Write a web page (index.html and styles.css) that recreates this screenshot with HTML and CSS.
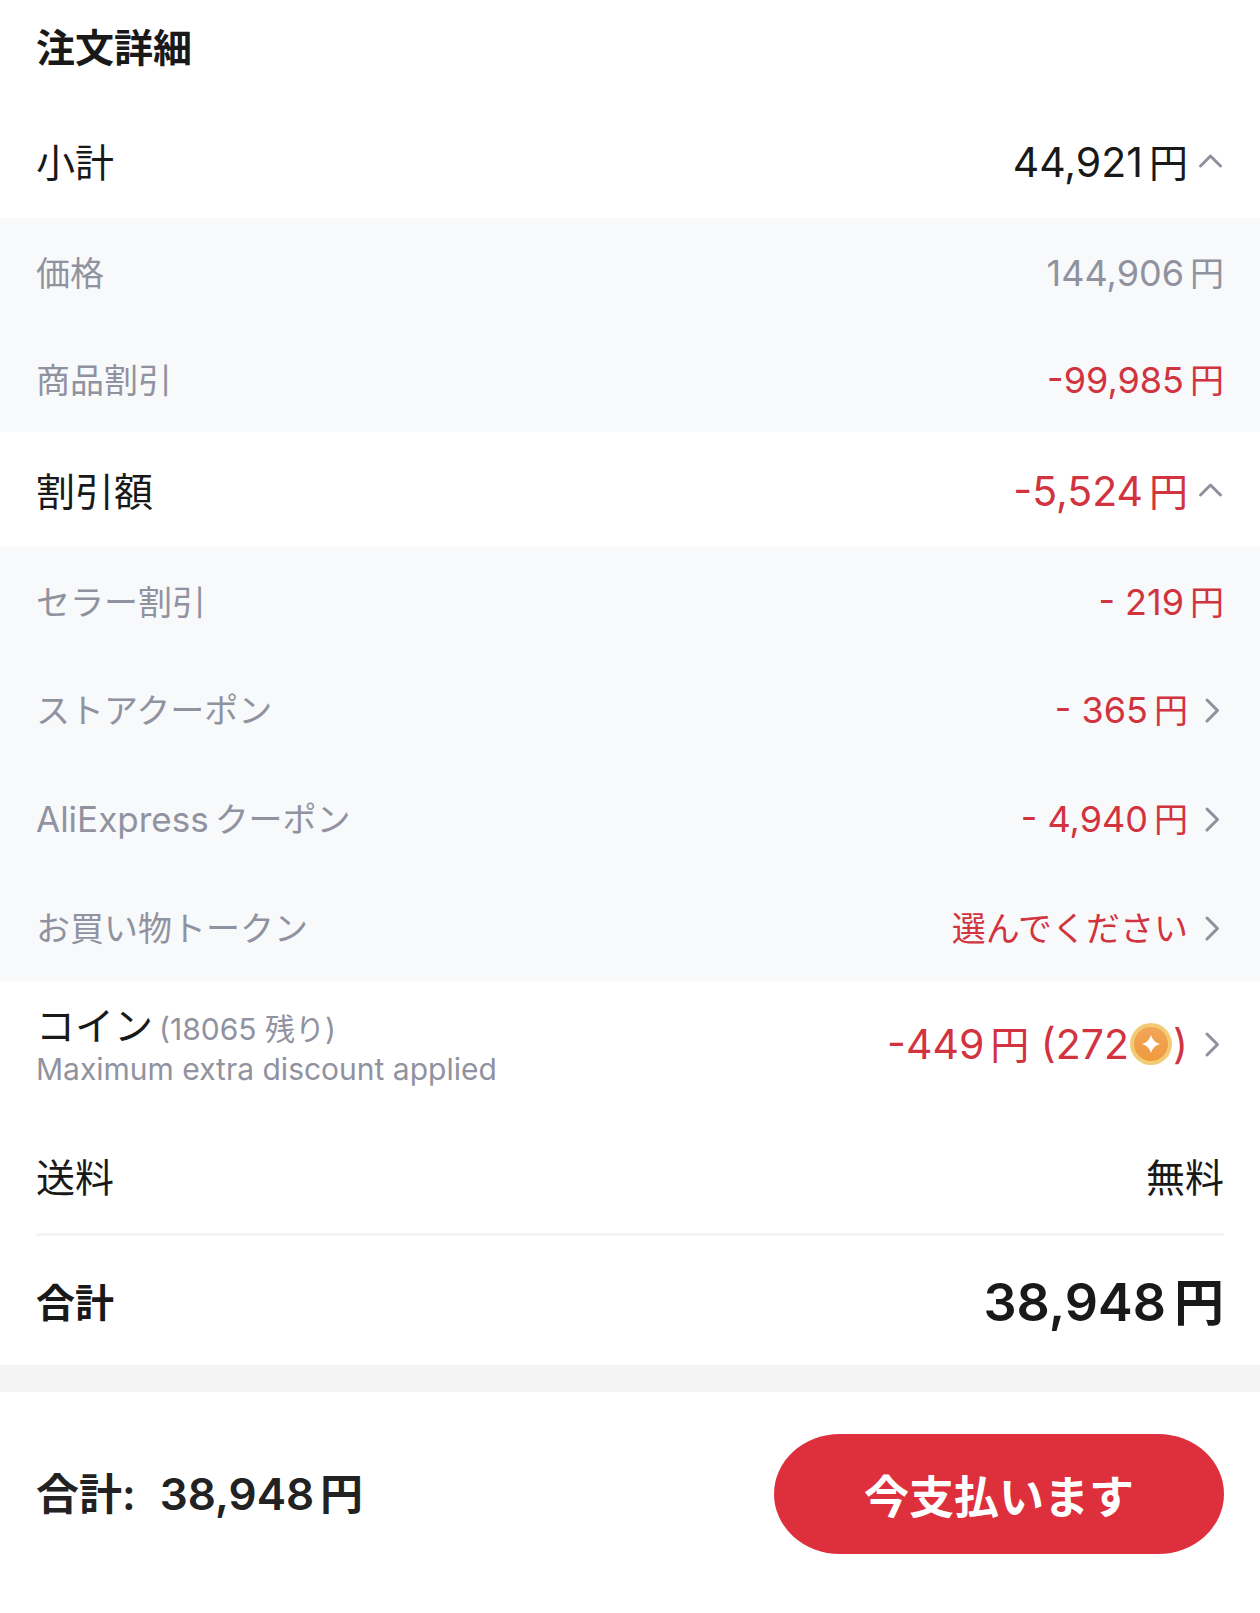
FILE: index.html
```html
<!DOCTYPE html>
<html lang="ja">

<head>
    <meta charset="UTF-8">
    <meta name="viewport" content="width=device-width, initial-scale=1.0">
    <title>注文詳細</title>
    <link rel="stylesheet" href="styles.css">
</head>

<body>
    <main class="order">
        <h1>注文詳細</h1>

        <button type="button" class="row main-row" aria-expanded="true">
            <span>小計</span>
            <span class="value">44,921<span class="yen">円</span></span>
            <svg class="arrow" viewBox="0 0 36 36"><path d="M12.500 21 L22.500 11 L32.500 21" /></svg>
        </button>
        <div class="details">
            <div class="row">
                <span>価格</span>
                <span class="value">144,906<span class="yen">円</span></span>
            </div>
            <div class="row">
                <span>商品割引</span>
                <span class="value red">-99,985<span class="yen">円</span></span>
            </div>
        </div>

        <button type="button" class="row main-row" aria-expanded="true">
            <span>割引額</span>
            <span class="value red">-5,524<span class="yen">円</span></span>
            <svg class="arrow" viewBox="0 0 36 36"><path d="M12.500 21 L22.500 11 L32.500 21" /></svg>
        </button>
        <div class="details">
            <div class="row">
                <span>セラー割引</span>
                <span class="value red">- 219<span class="yen">円</span></span>
            </div>
            <a href="#" class="row">
                <span>ストアクーポン</span>
                <span class="value red">- 365<span class="yen">円</span></span>
                <svg class="arrow" viewBox="0 0 36 36"><path d="M19 7 L29.500 17.500 L19 28" /></svg>
            </a>
            <a href="#" class="row">
                <span><span class="latin">AliExpress</span>クーポン</span>
                <span class="value red">- 4,940<span class="yen">円</span></span>
                <svg class="arrow" viewBox="0 0 36 36"><path d="M19 7 L29.500 17.500 L19 28" /></svg>
            </a>
            <a href="#" class="row">
                <span>お買い物トークン</span>
                <span class="value text-value red">選んでください</span>
                <svg class="arrow" viewBox="0 0 36 36"><path d="M19 7 L29.500 17.500 L19 28" /></svg>
            </a>
        </div>

        <a href="#" class="row main-row coin-row">
            <span class="coin-label">
                <span>コイン<small class="coin-left">(18065 残り)</small></span>
                <small>Maximum extra discount applied</small>
            </span>
            <span class="value red">-449<span class="yen">円</span> (272<svg class="coin" viewBox="0 0 42 42">
                    <defs>
                        <linearGradient id="coin-fill" x1="0" y1="0" x2="0" y2="1">
                            <stop offset="0" stop-color="#f2a65a" />
                            <stop offset="1" stop-color="#ef9a3d" />
                        </linearGradient>
                    </defs>
                    <circle cx="21" cy="21" r="21" fill="#f3cb74" />
                    <circle cx="21" cy="21" r="17" fill="url(#coin-fill)" />
                    <path d="M21 12 Q23 19 30 21 Q23 23 21 30 Q19 23 12 21 Q19 19 21 12 Z" fill="#fff" />
                </svg>)</span>
            <svg class="arrow" viewBox="0 0 36 36"><path d="M19 7 L29.500 17.500 L19 28" /></svg>
        </a>

        <div class="row main-row">
            <span>送料</span>
            <span class="value text-value">無料</span>
        </div>
        <hr>
        <div class="row total-row">
            <span>合計</span>
            <span class="value">38,948<span class="yen">円</span></span>
        </div>
    </main>

    <footer class="pay-bar">
        <p><span>合計:</span><span class="pay-total">38,948<span class="yen">円</span></span></p>
        <button type="button" class="pay-btn">今支払います</button>
    </footer>
</body>

</html>
```

FILE: styles.css
```css
/* Global Styles */
* {
    box-sizing: border-box;
}

body {
    font-family: "Inter", "Noto Sans CJK JP", sans-serif;
    background-color: #fff;
    color: #191919;
    margin: 0;
}

h1 {
    font-size: 39px;
    font-weight: 700;
    line-height: 56px;
    margin: 0;
    padding: 20px 36px 27px;
}

/* Rows */
.row {
    display: flex;
    align-items: center;
    width: 100%;
    min-height: 107px;
    padding: 4px 36px 0;
    border: none;
    background: none;
    color: #9192a0;
    font-family: inherit;
    font-size: 34px;
    line-height: 48px;
    text-align: left;
    text-decoration: none;
}

.value {
    margin-left: auto;
    font-size: 36px;
    white-space: nowrap;
}

.yen {
    margin-left: 6px;
    font-size: 34px;
}

.text-value {
    font-size: 34px;
}

.red {
    color: #d1333f;
}

.arrow {
    flex: none;
    width: 36px;
    height: 36px;
    fill: none;
    stroke: #8f909e;
    stroke-width: 3;
    stroke-linecap: round;
    stroke-linejoin: round;
}

.details {
    background-color: #f8f9fb;
}

.details a {
    min-height: 109px;
}

.latin {
    margin-right: 6px;
    font-size: 35px;
}

.main-row {
    min-height: 115px;
    color: #191919;
    font-size: 39px;
}

.main-row .value {
    font-size: 41px;
}

.main-row .yen,
.main-row .text-value {
    font-size: 39px;
}

.main-row .red {
    color: #d1333f;
}

/* Coins */
.coin-row {
    min-height: 127px;
    margin-bottom: 10px;
    padding-top: 0;
}

.coin-label {
    display: flex;
    flex-direction: column;
}

.coin-label small {
    color: #9192a0;
    font-size: 30px;
    line-height: 38px;
}

.coin-label .coin-left {
    margin-left: 6px;
}

.coin {
    width: 42px;
    height: 42px;
    margin: 0 1px;
    vertical-align: -6px;
}

/* Total */
hr {
    height: 3px;
    margin: 0 36px;
    border: none;
    background-color: #f4f4f4;
}

.total-row {
    min-height: 129px;
    color: #191919;
    font-size: 39px;
    font-weight: 600;
}

.total-row .value {
    font-size: 52px;
}

.total-row .yen {
    margin-left: 8px;
    font-size: 50px;
}

/* Pay bar */
.pay-bar {
    display: flex;
    align-items: center;
    justify-content: space-between;
    padding: 42px 36px 59px;
    border-top: 27px solid #f4f4f4;
    color: #222;
}

.pay-bar p {
    margin: 0;
    font-size: 43px;
    font-weight: 600;
    line-height: 60px;
}

.pay-total {
    margin-left: 24px;
    font-size: 44px;
}

.pay-bar .yen {
    font-size: 43px;
}

.pay-btn {
    width: 450px;
    height: 120px;
    border: none;
    border-radius: 66px / 60px;
    background-color: #dd2f3c;
    color: #fff;
    font-family: inherit;
    font-size: 45px;
    font-weight: 600;
    cursor: pointer;
}
```
